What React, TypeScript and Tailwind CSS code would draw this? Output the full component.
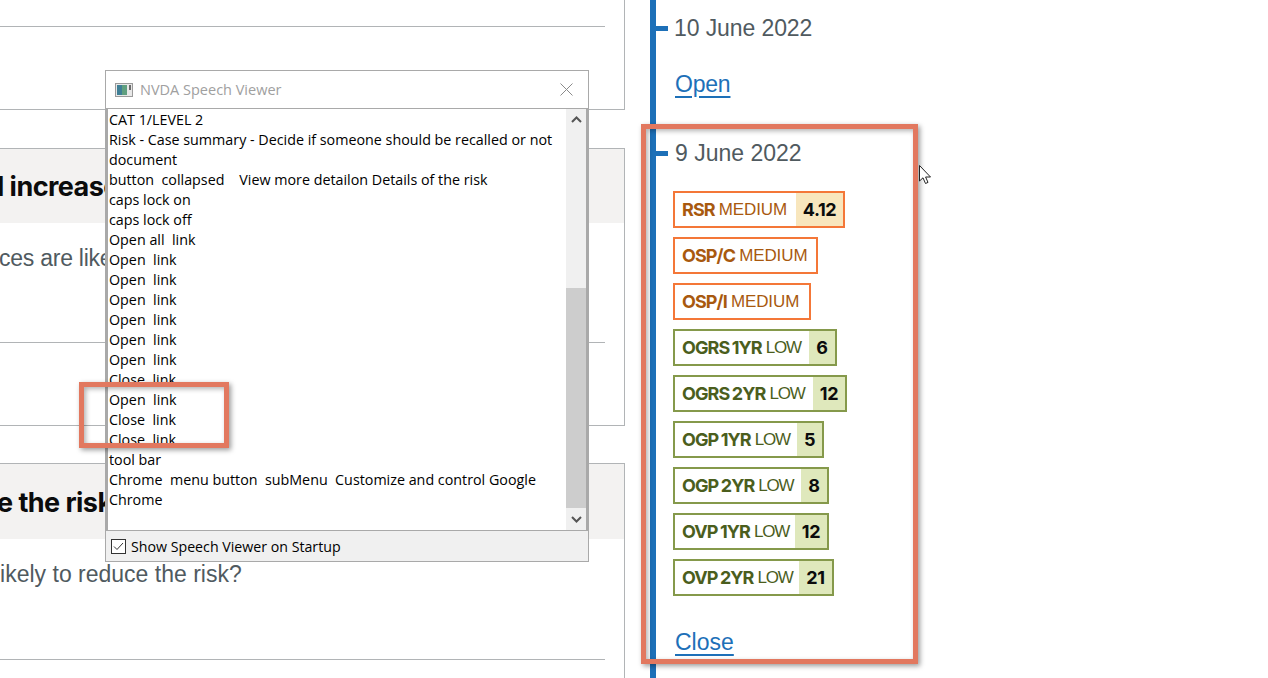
const SANS = "font-['Inter','Liberation_Sans',sans-serif]";
const ARIAL = "font-['Liberation_Sans',Arial,sans-serif]";

function Card({ heading, headerClass, body, bodyClass, lineClass }: { heading: string; headerClass: string; body: string; bodyClass: string; lineClass: string }) {
  return (
    <section className="w-[625px] h-[278px] border-y border-r border-[#b1b4b6] shrink-0 overflow-hidden">
      <div className={`bg-[#f3f2f1] flex items-center overflow-hidden ${headerClass}`}>
        <h2 className="-ml-[3px] text-[27px] leading-[32px] font-bold text-[#0b0c0c] whitespace-nowrap tracking-[-0.55px]">{heading}</h2>
      </div>
      <p className={`mt-[20px] text-[23px] leading-[30px] text-[#505a5f] whitespace-nowrap ${ARIAL} ${bodyClass}`}>{body}</p>
      <div className={`w-[605px] border-b border-[#b1b4b6] ${lineClass}`} />
    </section>
  );
}

type BadgeProps = { name: string; level: string; score?: string; tone: "orange" | "green"; w: string; sw?: string };

function Badge({ name, level, score, tone, w, sw }: BadgeProps) {
  const orange = tone === "orange";
  return (
    <div className={`h-[37px] flex items-stretch justify-between border-2 ${w} ${orange ? "border-[#f47738]" : "border-[#85994b]"}`}>
      <div className={`pl-[7px] flex items-center gap-[4px] whitespace-nowrap text-[18px] ${orange ? "text-[#a8590f]" : "text-[#4b5e1d]"}`}>
        <b className="font-bold tracking-[-0.9px] [word-spacing:-1px]">{name}</b>
        <span className={`text-[17px] ${ARIAL} ${level === "LOW" ? "tracking-[-1.2px]" : "tracking-[-0.1px]"}`}>{level}</span>
      </div>
      {score && (
        <div className={`flex items-center justify-center text-[18px] font-bold text-[#0b0c0c] tracking-[-0.4px] ${sw} ${orange ? "bg-[#f8e6bd]" : "bg-[#dfe8bc]"}`}>
          {score}
        </div>
      )}
    </div>
  );
}

function DateRow({ text, textClass }: { text: string; textClass: string }) {
  return (
    <div className="flex items-center h-[30px]">
      <div className="w-[12px] h-[5px] bg-[#1d70b8]" />
      <span className={`text-[23px] text-[#505a5f] whitespace-nowrap ${ARIAL} ${textClass}`}>{text}</span>
    </div>
  );
}

const badges: BadgeProps[] = [
  { name: "RSR", level: "MEDIUM", score: "4.12", tone: "orange", w: "w-[172px]", sw: "w-[47px]" },
  { name: "OSP/C", level: "MEDIUM", tone: "orange", w: "w-[145px]" },
  { name: "OSP/I", level: "MEDIUM", tone: "orange", w: "w-[138px]" },
  { name: "OGRS 1YR", level: "LOW", score: "6", tone: "green", w: "w-[164px]", sw: "w-[26px]" },
  { name: "OGRS 2YR", level: "LOW", score: "12", tone: "green", w: "w-[174px]", sw: "w-[32px]" },
  { name: "OGP 1YR", level: "LOW", score: "5", tone: "green", w: "w-[151px]", sw: "w-[25px]" },
  { name: "OGP 2YR", level: "LOW", score: "8", tone: "green", w: "w-[156px]", sw: "w-[26px]" },
  { name: "OVP 1YR", level: "LOW", score: "12", tone: "green", w: "w-[156px]", sw: "w-[32px]" },
  { name: "OVP 2YR", level: "LOW", score: "21", tone: "green", w: "w-[161px]", sw: "w-[33px]" },
];

const speech = [
  "CAT 1/LEVEL 2",
  "Risk - Case summary - Decide if someone should be recalled or not",
  "document",
  "button  collapsed    View more detailon Details of the risk",
  "caps lock on",
  "caps lock off",
  "Open all  link",
  "Open  link",
  "Open  link",
  "Open  link",
  "Open  link",
  "Open  link",
  "Open  link",
  "Close  link",
  "Open  link",
  "Close  link",
  "Close  link",
  "tool bar",
  "Chrome  menu button  subMenu  Customize and control Google",
  "Chrome",
];

function SpeechViewer() {
  return (
    <div className="absolute left-[105px] top-[70px] w-[484px] h-[492px] border border-[#a9a9a9] bg-white flex flex-col font-['Open_Sans',sans-serif]">
      <div className="h-[37px] shrink-0 flex items-center pl-[9px] pr-[15px]">
        <svg width="18" height="14" viewBox="0 0 18 14" className="shrink-0">
          <rect x="0.5" y="0.5" width="17" height="13" fill="#e8e8e8" stroke="#9a9a9a" />
          <rect x="2" y="2" width="10" height="10" fill="#5f9f7f" />
          <rect x="2" y="2" width="5" height="10" fill="#3f7f96" />
          <rect x="14" y="2" width="2" height="5" fill="#6b6b6b" />
        </svg>
        <span className="ml-[7px] text-[14.5px] text-[#a0a0a0] whitespace-nowrap">NVDA Speech Viewer</span>
        <svg width="13" height="13" viewBox="0 0 13 13" className="ml-auto" fill="none" stroke="#8a8a8a" strokeWidth="1">
          <path d="M0.5 0.5 12.5 12.5M12.5 0.5 0.5 12.5" />
        </svg>
      </div>
      <div className="flex-1 min-h-0 flex border-t border-[#a9a9a9] border-l-2 border-l-[#a9a9a9] border-r-2 border-r-[#a9a9a9] border-b border-b-[#a9a9a9]">
        <div className="flex-1 pl-[1px] pt-[1px] text-[14.3px] leading-[20px] text-black whitespace-pre overflow-hidden">
          {speech.map((l, i) => (
            <div key={i}>{l}</div>
          ))}
        </div>
        <div className="w-[20px] bg-[#f0f0f0] flex flex-col items-center">
          <div className="h-[21px] w-full flex items-center justify-center">
            <svg width="11" height="7" viewBox="0 0 11 7" fill="none" stroke="#555" strokeWidth="2"><path d="M1 6 5.5 1.5 10 6" /></svg>
          </div>
          <div className="h-[158px]" />
          <div className="h-[220px] w-full bg-[#cdcdcd]" />
          <div className="flex-1 w-full flex items-center justify-center">
            <svg width="11" height="7" viewBox="0 0 11 7" fill="none" stroke="#555" strokeWidth="2"><path d="M1 1 5.5 5.5 10 1" /></svg>
          </div>
        </div>
      </div>
      <div className="h-[30px] shrink-0 bg-[#f0f0f0] flex items-center pl-[5px]">
        <div className="w-[15px] h-[15px] border border-[#333] bg-white flex items-center justify-center">
          <svg width="11" height="9" viewBox="0 0 11 9" fill="none" stroke="#333" strokeWidth="1"><path d="M1 4.5 4 7.5 10 1" /></svg>
        </div>
        <span className="ml-[5px] pt-[1px] text-[14.2px] text-black whitespace-nowrap">Show Speech Viewer on Startup</span>
      </div>
    </div>
  );
}

export default function App() {
  return (
    <div className={`relative w-[1268px] h-[678px] overflow-hidden bg-white flex ${SANS}`}>
      <main className="w-[625px] shrink-0 flex flex-col">
        <section className="h-[110px] w-[625px] shrink-0 border-r border-b border-[#b1b4b6]">
          <div className="h-[27px] w-[605px] border-b border-[#b1b4b6]" />
        </section>
        <div className="h-[38px] shrink-0" />
        <Card heading="l increase" headerClass="h-[74px] pt-[1px]" body="ces are likely" bodyClass="-ml-[1px] tracking-[-0.25px]" lineClass="mt-[69px]" />
        <div className="h-[37px] shrink-0" />
        <Card heading="e the risk" headerClass="h-[75px] pt-[2px]" body="likely to reduce the risk?" bodyClass="-ml-[5px]" lineClass="mt-[70px]" />
      </main>

      <aside className="ml-[25px] w-[300px] h-full border-l-[6px] border-[#1d70b8] shrink-0 flex flex-col">
        <div className="mt-[13px]">
          <DateRow text="10 June 2022" textClass="ml-[6px] tracking-[-0.1px]" />
        </div>
        <a className={`mt-[25px] ml-[19px] text-[23px] leading-[32px] text-[#1d70b8] underline underline-offset-[4px] w-fit tracking-[-0.2px] ${ARIAL}`}>Open</a>
        <div className="mt-[38px]">
          <DateRow text="9 June 2022" textClass="ml-[7px]" />
        </div>
        <div className="mt-[23px] ml-[17px] flex flex-col gap-[9px]">
          {badges.map((b) => (
            <Badge key={b.name} {...b} />
          ))}
        </div>
        <a className={`mt-[30px] ml-[19px] text-[23px] leading-[32px] text-[#1d70b8] underline underline-offset-[4px] w-fit ${ARIAL}`}>Close</a>
      </aside>

      <SpeechViewer />

      <div className="absolute left-[641px] top-[124px] w-[277px] h-[540px] border-[5px] border-[#e2785f] shadow-[2px_2px_5px_rgba(0,0,0,0.4),inset_2px_2px_5px_rgba(0,0,0,0.3)]" />
      <div className="absolute left-[79px] top-[382px] w-[150px] h-[66px] border-[5px] border-[#e2785f] shadow-[2px_2px_5px_rgba(0,0,0,0.4),inset_2px_2px_5px_rgba(0,0,0,0.3)]" />

      <svg className="absolute left-[919px] top-[165px]" width="14" height="20" viewBox="0 0 14 20" fill="white" stroke="#222" strokeWidth="1">
        <path d="M0.5 0.5V16L4 12.8 6.5 18.5 9 17.4 6.6 12H11.5Z" />
      </svg>
    </div>
  );
}
